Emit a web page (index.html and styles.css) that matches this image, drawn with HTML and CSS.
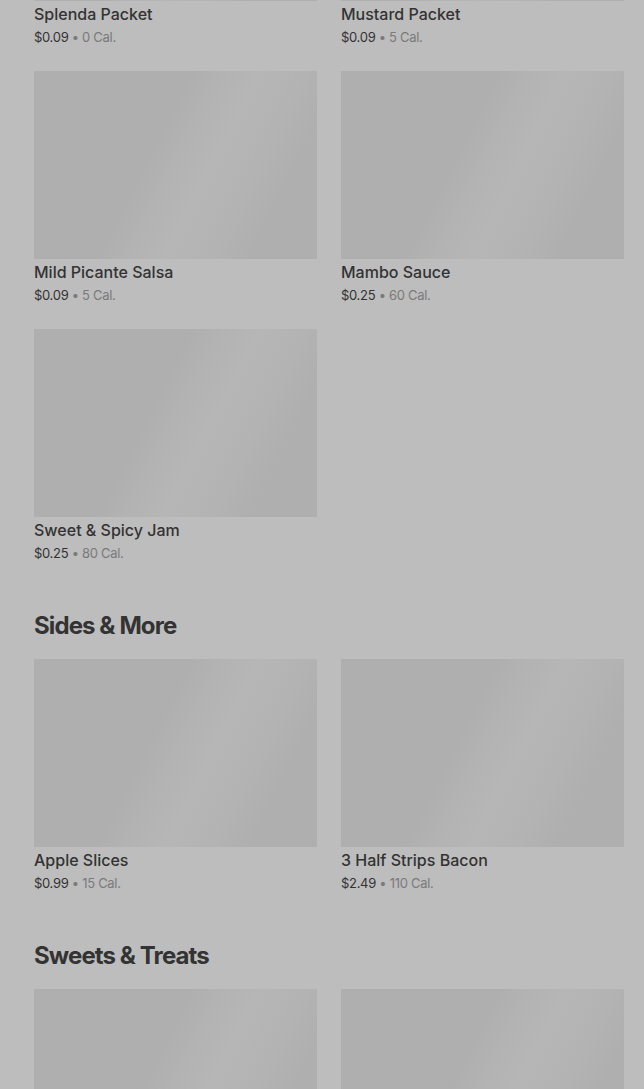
FILE: index.html
```html
<!DOCTYPE html>
<html lang="en">
<head>
    <meta charset="UTF-8">
    <meta name="viewport" content="width=device-width, initial-scale=1">
    <title>Menu</title>
    <link rel="stylesheet" href="styles.css">
</head>
<body>
    <div class="menu">
        <!-- Condiments (scrolled past the top) -->
        <section class="section section-first">
            <div class="item-grid">
                <div class="item">
                    <div class="item-img"></div>
                    <div class="item-name">Splenda Packet</div>
                    <div class="item-meta"><span class="price">$0.09</span> • 0 Cal.</div>
                </div>
                <div class="item">
                    <div class="item-img"></div>
                    <div class="item-name">Mustard Packet</div>
                    <div class="item-meta"><span class="price">$0.09</span> • 5 Cal.</div>
                </div>
                <div class="item">
                    <div class="item-img"></div>
                    <div class="item-name">Mild Picante Salsa</div>
                    <div class="item-meta"><span class="price">$0.09</span> • 5 Cal.</div>
                </div>
                <div class="item">
                    <div class="item-img"></div>
                    <div class="item-name">Mambo Sauce</div>
                    <div class="item-meta"><span class="price">$0.25</span> • 60 Cal.</div>
                </div>
                <div class="item">
                    <div class="item-img"></div>
                    <div class="item-name">Sweet &amp; Spicy Jam</div>
                    <div class="item-meta"><span class="price">$0.25</span> • 80 Cal.</div>
                </div>
            </div>
        </section>

        <section class="section">
            <h2 class="section-title">Sides &amp; More</h2>
            <div class="item-grid">
                <div class="item">
                    <div class="item-img"></div>
                    <div class="item-name">Apple Slices</div>
                    <div class="item-meta"><span class="price">$0.99</span> • 15 Cal.</div>
                </div>
                <div class="item">
                    <div class="item-img"></div>
                    <div class="item-name">3 Half Strips Bacon</div>
                    <div class="item-meta"><span class="price">$2.49</span> • 110 Cal.</div>
                </div>
            </div>
        </section>

        <section class="section">
            <h2 class="section-title">Sweets &amp; Treats</h2>
            <div class="item-grid">
                <div class="item">
                    <div class="item-img"></div>
                </div>
                <div class="item">
                    <div class="item-img"></div>
                </div>
            </div>
        </section>
    </div>
</body>
</html>
```

FILE: styles.css
```css
html, body {
     margin: 0;
     padding: 0;
     height: 100%;
     overflow: hidden;
     background-color: #bdbdbd;
 }

body {
     font-family: "Inter", "Liberation Sans", sans-serif;
     color: #333333;
 }

.menu {
     padding: 0 20px 0 34px;
 }

.section-first {
     margin-top: -187px;
 }

.section {
     margin-bottom: 47px;
 }

.section-title {
     margin: 0 0 17px 0;
     font-size: 24px;
     line-height: 32px;
     font-weight: 700;
     letter-spacing: -0.9px;
     color: #333333;
 }

.item-grid {
     display: grid;
     grid-template-columns: 283px 283px;
     column-gap: 24px;
     row-gap: 24px;
 }

.item-img {
     height: 188px;
     background-color: #afafaf;
     background-image: linear-gradient(117deg, #afafaf 0%, #afafaf 42%, #b3b3b3 50%, #b6b6b6 60%, #b3b3b3 72%, #afafaf 82%, #afafaf 100%);
 }

.item-name {
     padding-top: 1px;
     font-size: 16px;
     line-height: 24px;
     font-weight: 500;
     letter-spacing: 0;
     color: #333333;
 }

.item-meta {
     padding-top: 1px;
     font-size: 13px;
     line-height: 20px;
     color: #7a7a7a;
     letter-spacing: -0.3px;
 }

.price {
     color: #333333;
 }
```
